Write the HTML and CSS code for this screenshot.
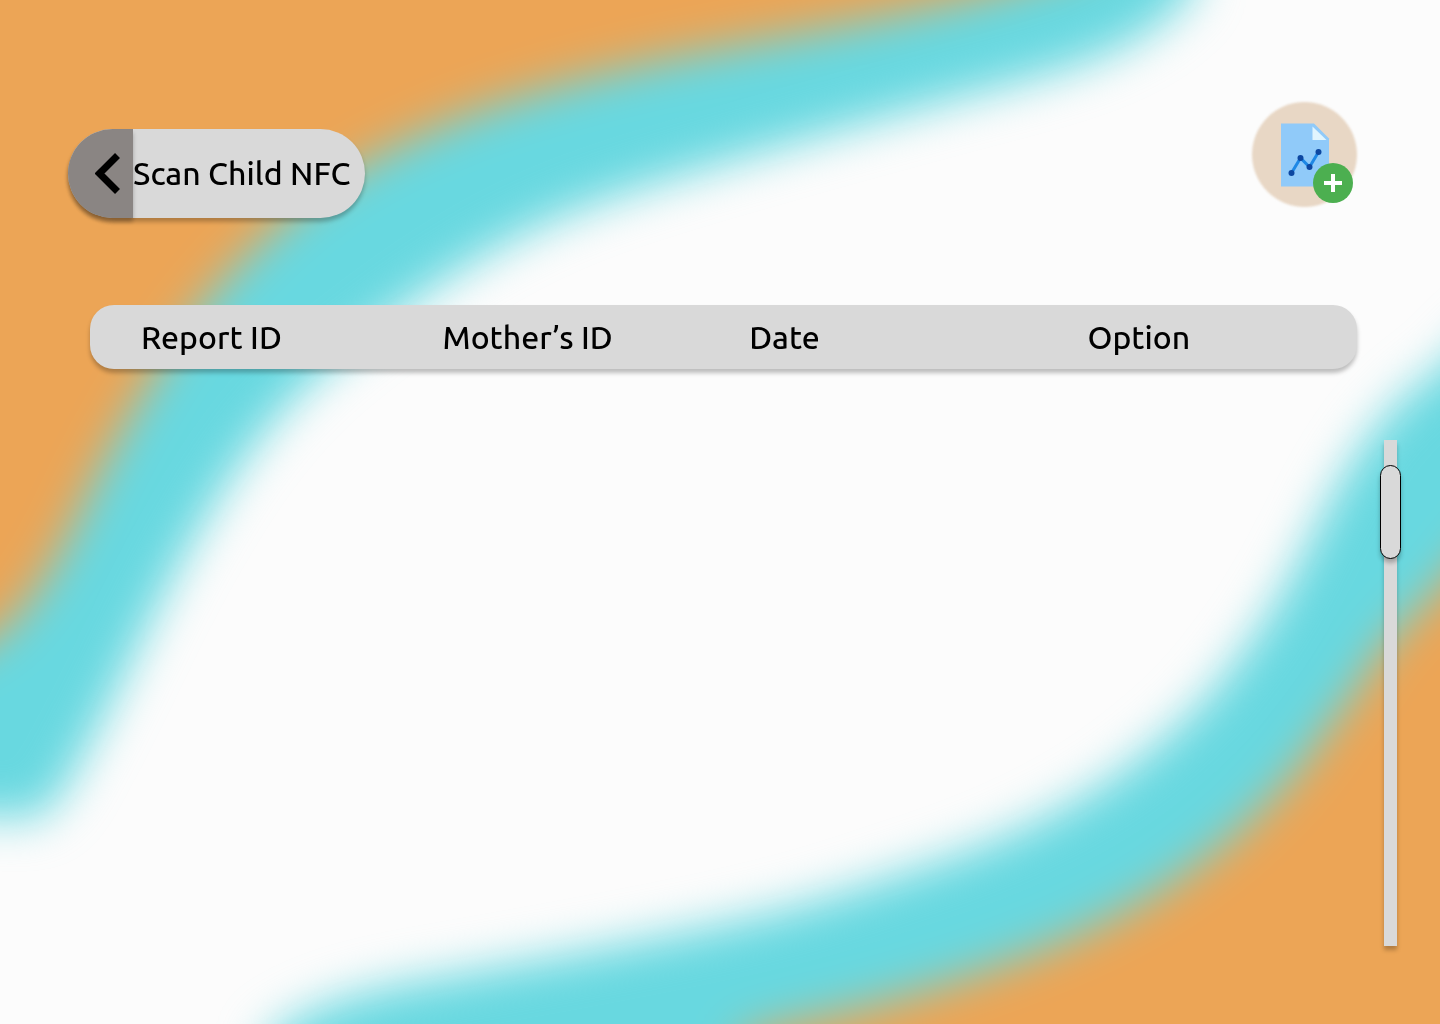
FILE: index.html
```html
<!DOCTYPE html>
<html lang="en">
<head>
<meta charset="utf-8">
<meta name="viewport" content="width=device-width, initial-scale=1">
<title>Scan Child NFC</title>
<link rel="stylesheet" href="styles.css">
</head>
<body>
<svg class="backdrop" viewBox="0 0 1440 1024" preserveAspectRatio="none" aria-hidden="true">
  <defs>
    <filter id="soft" filterUnits="userSpaceOnUse" x="-200" y="-200" width="1840" height="1424" color-interpolation-filters="sRGB">
      <feGaussianBlur stdDeviation="23"/>
    </filter>
  </defs>
  <g filter="url(#soft)">
    <path fill="#68d8e0" d="M-200 815H0C40 832 60 800 80 760C125 680 155 600 209 512C240 460 277 410 323 370C377 325 440 278 505 243C570 208 640 187 720 164C820 135 900 113 1000 87C1080 66 1150 46 1196 -12V-200H-200Z"/>
    <path fill="#eca556" d="M-200 760L0 633C35 600 57 560 80 512C104 460 129 415 162 362C199 305 239 260 289 217C334 178 387 148 462 118C540 88 630 66 720 49C810 32 890 18 985 -6L1100 -40V-200H-200Z"/>
    <path fill="#68d8e0" d="M1640 172L1440 370C1385 405 1353 457 1324 512C1298 565 1273 615 1237 660C1203 708 1160 745 1110 780C1050 820 980 850 904 873C840 895 790 910 720 925C630 944 540 960 450 976C370 989 310 1003 266 1040V1224H1640Z"/>
    <path fill="#eca556" d="M1640 340L1440 588C1412 616 1390 636 1368 670C1354 696 1341 709 1324 733C1305 762 1283 787 1256 814C1208 861 1148 901 1093 927C1024 960 942 987 858 1009C820 1018 780 1026 740 1038V1224H1640Z"/>
  </g>
</svg>
<main class="page">
  <header class="toolbar">
    <button class="back" type="button">
      <span class="back-icon">
        <svg width="26" height="42" viewBox="0 0 26 42" aria-hidden="true"><path d="M22.500 2.500L4.500 20.500L22.500 38.500" fill="none" stroke="#000" stroke-width="7"/></svg>
      </span>
      <span class="back-label">Scan Child NFC</span>
    </button>
    <button class="add" type="button" aria-label="Add report">
      <svg width="106" height="106" viewBox="0 0 106 106" aria-hidden="true">
        <path fill="#90caf9" d="M29 22.500H62L77 37.500V85.500H29Z"/>
        <path fill="#e1f5fe" d="M60.500 25.500V39H74.500Z"/>
        <path fill="none" stroke="#1e88e5" stroke-width="3" d="M39.500 72L48.500 57L57.500 66L66.500 51"/>
        <g fill="#0d47a1"><circle cx="39.500" cy="72" r="3"/><circle cx="48.500" cy="57" r="3"/><circle cx="57.500" cy="66" r="3"/><circle cx="66.500" cy="51" r="3"/></g>
        <circle cx="81" cy="82" r="20" fill="#4caf50"/>
        <path fill="#fff" d="M79 73H83V80H90V84H83V91H79V84H72V80H79Z"/>
      </svg>
    </button>
  </header>
  <table class="reports">
    <thead>
      <tr>
        <th class="col-report" scope="col">Report ID</th>
        <th class="col-mother" scope="col">Mother’s ID</th>
        <th class="col-date" scope="col">Date</th>
        <th class="col-option" scope="col">Option</th>
      </tr>
    </thead>
  </table>
  <div class="scroll">
    <input class="slider" type="range" min="0" max="412" value="25" aria-label="Scroll reports">
  </div>
</main>
</body>
</html>
```
FILE: styles.css
```css
* {
  box-sizing: border-box;
}

body {
  margin: 0;
  min-height: 100vh;
  background: #fcfcfc;
  color: #000;
  font-family: Ubuntu, "Noto Sans", sans-serif;
  font-size: 32px;
  font-weight: 500;
  line-height: 40px;
}

button {
  border: 0;
  padding: 0;
  color: inherit;
  font: inherit;
  cursor: pointer;
}

.backdrop {
  position: fixed;
  inset: 0;
  z-index: -1;
  width: 100%;
  height: 100%;
}

.page {
  display: flex;
  flex-direction: column;
  min-height: 100vh;
  padding: 101px 39px 78px 68px;
}

.toolbar {
  display: flex;
  align-items: flex-start;
  justify-content: space-between;
  padding-right: 43px;
}

.back {
  display: flex;
  align-items: stretch;
  height: 89px;
  margin-top: 28px;
  padding-right: 14px;
  border-radius: 45px;
  background: #d9d9d9;
  box-shadow: 0 4px 4px rgba(0, 0, 0, 0.25);
}

.back-icon {
  display: flex;
  align-items: center;
  justify-content: flex-end;
  width: 65px;
  padding-right: 12px;
  border-radius: 45px 0 0 45px;
  background: #8a8583;
  box-shadow: 0 4px 4px rgba(0, 0, 0, 0.25);
}

.back-label {
  align-self: center;
  padding-bottom: 2px;
}

.add {
  position: relative;
  width: 106px;
  height: 106px;
  background: none;
}

.add::before {
  content: "";
  position: absolute;
  inset: 1px 1px 0 0;
  border-radius: 50%;
  background: #e8d7c5;
  filter: blur(1px);
}

.add svg {
  display: block;
  position: relative;
}

.reports {
  width: calc(100% - 66px);
  height: 64px;
  margin: 87px 0 0 22px;
  border-spacing: 0;
  table-layout: fixed;
  border-radius: 24px;
  background: #d9d9d9;
  box-shadow: 0 4px 4px rgba(0, 0, 0, 0.25);
}

.reports th {
  padding: 0 0 0 51px;
  font-weight: inherit;
  text-align: left;
  white-space: nowrap;
}

.col-report {
  width: 23.8%;
}

.col-mother {
  width: 24.2%;
}

.col-date {
  width: 26.7%;
}

.scroll {
  display: flex;
  flex: 1;
  justify-content: flex-end;
  margin-top: 71px;
}

.slider {
  appearance: none;
  writing-mode: vertical-lr;
  width: 21px;
  height: auto;
  min-height: 200px;
  margin: 0;
  background: none;
}

.slider::-webkit-slider-runnable-track {
  width: 13px;
  background: #d9d9d9;
  box-shadow: 0 4px 4px rgba(0, 0, 0, 0.25);
}

.slider::-webkit-slider-thumb {
  appearance: none;
  width: 21px;
  height: 94px;
  margin-left: -4px;
  border: 1px solid #000;
  border-radius: 11px;
  background: #d9d9d9;
  box-shadow: 0 4px 4px rgba(0, 0, 0, 0.25);
}
```
